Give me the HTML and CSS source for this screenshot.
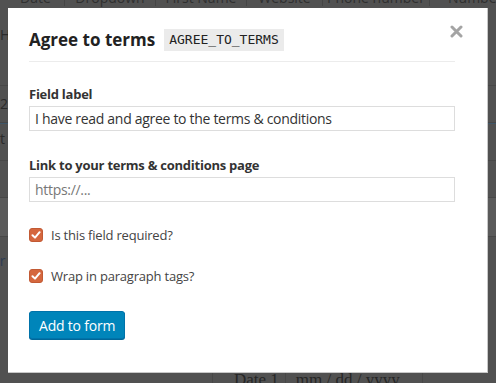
FILE: index.html
```html
<!DOCTYPE html>
<html lang="en">
<head>
  <meta charset="UTF-8">
  <meta name="viewport" content="width=device-width, initial-scale=1.0">
  <title>Agree to terms</title>
  <link rel="stylesheet" href="styles.css">
</head>
<body>

<div class="page">
  <div class="tabs">
    <span class="tab tab-date">Date</span>
    <span class="tab tab-w91">Dropdown</span>
    <span class="tab tab-w91">First Name</span>
    <span class="tab tab-w76">Website</span>
    <span class="tab tab-w107">Phone number</span>
    <span class="tab tab-last">Number</span>
  </div>
  <div class="rows">
    <div class="row row-hi">Hi</div>
    <div class="row">2</div>
    <div class="row row-blue">t</div>
    <div class="row"></div>
    <div class="row row-dark"></div>
    <div class="row row-er">er</div>
  </div>
  <div class="date-row">
    <span class="date-label">Date 1</span>
    <span class="date-input">mm / dd / yyyy</span>
  </div>
</div>

<div class="modal">
  <div class="modal-inner">
    <div class="modal-head">
      <h2>Agree to terms</h2>
      <code class="tag">AGREE_TO_TERMS</code>
    </div>
    <span class="close">
      <svg width="13" height="13" viewBox="0 0 13 13">
        <path d="M2 2 L11 11 M11 2 L2 11" stroke="#a4a4a4" stroke-width="3" stroke-linecap="round"/>
      </svg>
    </span>

    <div class="field">
      <label class="field-label">Field label</label>
      <input type="text" class="text-input" value="I have read and agree to the terms &amp; conditions">
    </div>

    <div class="field">
      <label class="field-label">Link to your terms &amp; conditions page</label>
      <input type="text" class="text-input" placeholder="https://...">
    </div>

    <label class="check">
      <span class="box">
        <svg width="10" height="10" viewBox="0 0 10 10"><path d="M1.5 5.2 L4 7.6 L8.6 2.2" fill="none" stroke="#fff" stroke-width="2" stroke-linecap="round" stroke-linejoin="round"/></svg>
      </span>
      Is this field required?
    </label>

    <label class="check">
      <span class="box">
        <svg width="10" height="10" viewBox="0 0 10 10"><path d="M1.5 5.2 L4 7.6 L8.6 2.2" fill="none" stroke="#fff" stroke-width="2" stroke-linecap="round" stroke-linejoin="round"/></svg>
      </span>
      Wrap in paragraph tags?
    </label>

    <button class="btn">Add to form</button>
  </div>
</div>

</body>
</html>
```

FILE: styles.css
```css
body {
  margin: 0;
  padding: 0;
  background: #515151;
  font-family: 'Open Sans', 'DejaVu Sans', sans-serif;
  overflow: hidden;
}
.page {
  height: 383px;
  position: relative;
  color: #2a2a2a;
}
.tabs {
  display: flex;
  height: 8px;
  overflow: hidden;
  white-space: nowrap;
}
.tab {
  flex-shrink: 0;
  box-sizing: border-box;
  height: 8px;
  font-size: 14px;
  line-height: 0;
  margin-top: -2px;
  text-align: center;
  border-right: 1px solid #444;
  color: #2f2f2f;
}
.tab-date {
  width: 65px;
  text-align: left;
  padding-left: 20px;
}
.tab-w91 {
  width: 91px;
}
.tab-w76 {
  width: 76px;
}
.tab-w107 {
  width: 107px;
}
.tab-last {
  padding-left: 18px;
  border-right: none;
}
.rows {
  padding-top: 17px;
}
.row {
  font-size: 14px;
  height: 36px;
  line-height: 36px;
  border-bottom: 1px solid #474747;
  color: #2a2a2a;
}
.row-hi {
  height: 60px;
  line-height: 20px;
}
.row-blue {
  border-top: 1px solid #3f5668;
  line-height: 30px;
}
.row-dark {
  background: #5a5a5a;
  height: 38px;
}
.row-er {
  color: #2c3b52;
  border-bottom: none;
  height: 50px;
  line-height: 48px;
  margin-left: -8px;
}
.date-row {
  position: absolute;
  left: 212px;
  top: 368px;
  display: flex;
  white-space: nowrap;
  font-family: 'Liberation Serif', serif;
  font-size: 17px;
  line-height: 24px;
  color: #262626;
}
.date-label {
  padding: 0 6px 0 21px;
  border-left: 1px solid #474747;
  border-right: 1px solid #474747;
}
.date-input {
  padding: 0 22px 0 10px;
  border-right: 1px solid #474747;
}

.modal {
  position: fixed;
  left: 8px;
  top: 8px;
  width: 479px;
  height: 364px;
  background: #fff;
  border-right: 1px solid #c8c8c8;
  border-bottom: 1px solid #c8c8c8;
}
.modal-inner {
  position: relative;
  width: 426px;
  margin-left: 21px;
}
.modal-head {
  display: flex;
  align-items: center;
  padding: 20px 0 10px;
  border-bottom: 1px solid #ececec;
}
h2 {
  margin: 0 9px 0 0;
  font-size: 17px;
  font-weight: 700;
  color: #222;
}
.tag {
  font-family: 'DejaVu Sans Mono', monospace;
  font-size: 13px;
  background: #ebebeb;
  color: #222;
  padding: 3px 5px;
  line-height: 16px;
}
.close {
  position: absolute;
  right: -8px;
  top: 17px;
  line-height: 0;
}
.field {
  margin-top: 23px;
}
.field + .field {
  margin-top: 25px;
}
.field-label {
  display: block;
  font-size: 13px;
  line-height: 18px;
  font-weight: 700;
  color: #333;
  margin-bottom: 3px;
  letter-spacing: -0.25px;
}
.text-input {
  display: block;
  box-sizing: border-box;
  width: 100%;
  height: 25px;
  border: 1px solid #ddd;
  padding: 0 5px;
  font-family: inherit;
  font-size: 14px;
  letter-spacing: -0.3px;
  color: #333;
  outline: none;
}
.text-input::placeholder {
  color: #777;
}
.check {
  display: flex;
  align-items: center;
  font-size: 13px;
  line-height: 18px;
  letter-spacing: -0.2px;
  color: #444;
  margin-top: 24px;
}
.check + .check {
  margin-top: 23px;
}
.box {
  box-sizing: border-box;
  width: 14px;
  height: 14px;
  margin-right: 8px;
  border-radius: 3px;
  background: #d5673e;
  border: 1px solid #c25a34;
  display: flex;
  align-items: center;
  justify-content: center;
}
.btn {
  display: block;
  margin-top: 26px;
  height: 28px;
  padding: 0 9px;
  border: 1px solid #0073aa;
  border-radius: 3px;
  background: #0085ba;
  box-shadow: 0 1px 0 #006799;
  color: #fff;
  font-family: inherit;
  font-size: 14px;
  letter-spacing: -0.2px;
  cursor: pointer;
}
```
